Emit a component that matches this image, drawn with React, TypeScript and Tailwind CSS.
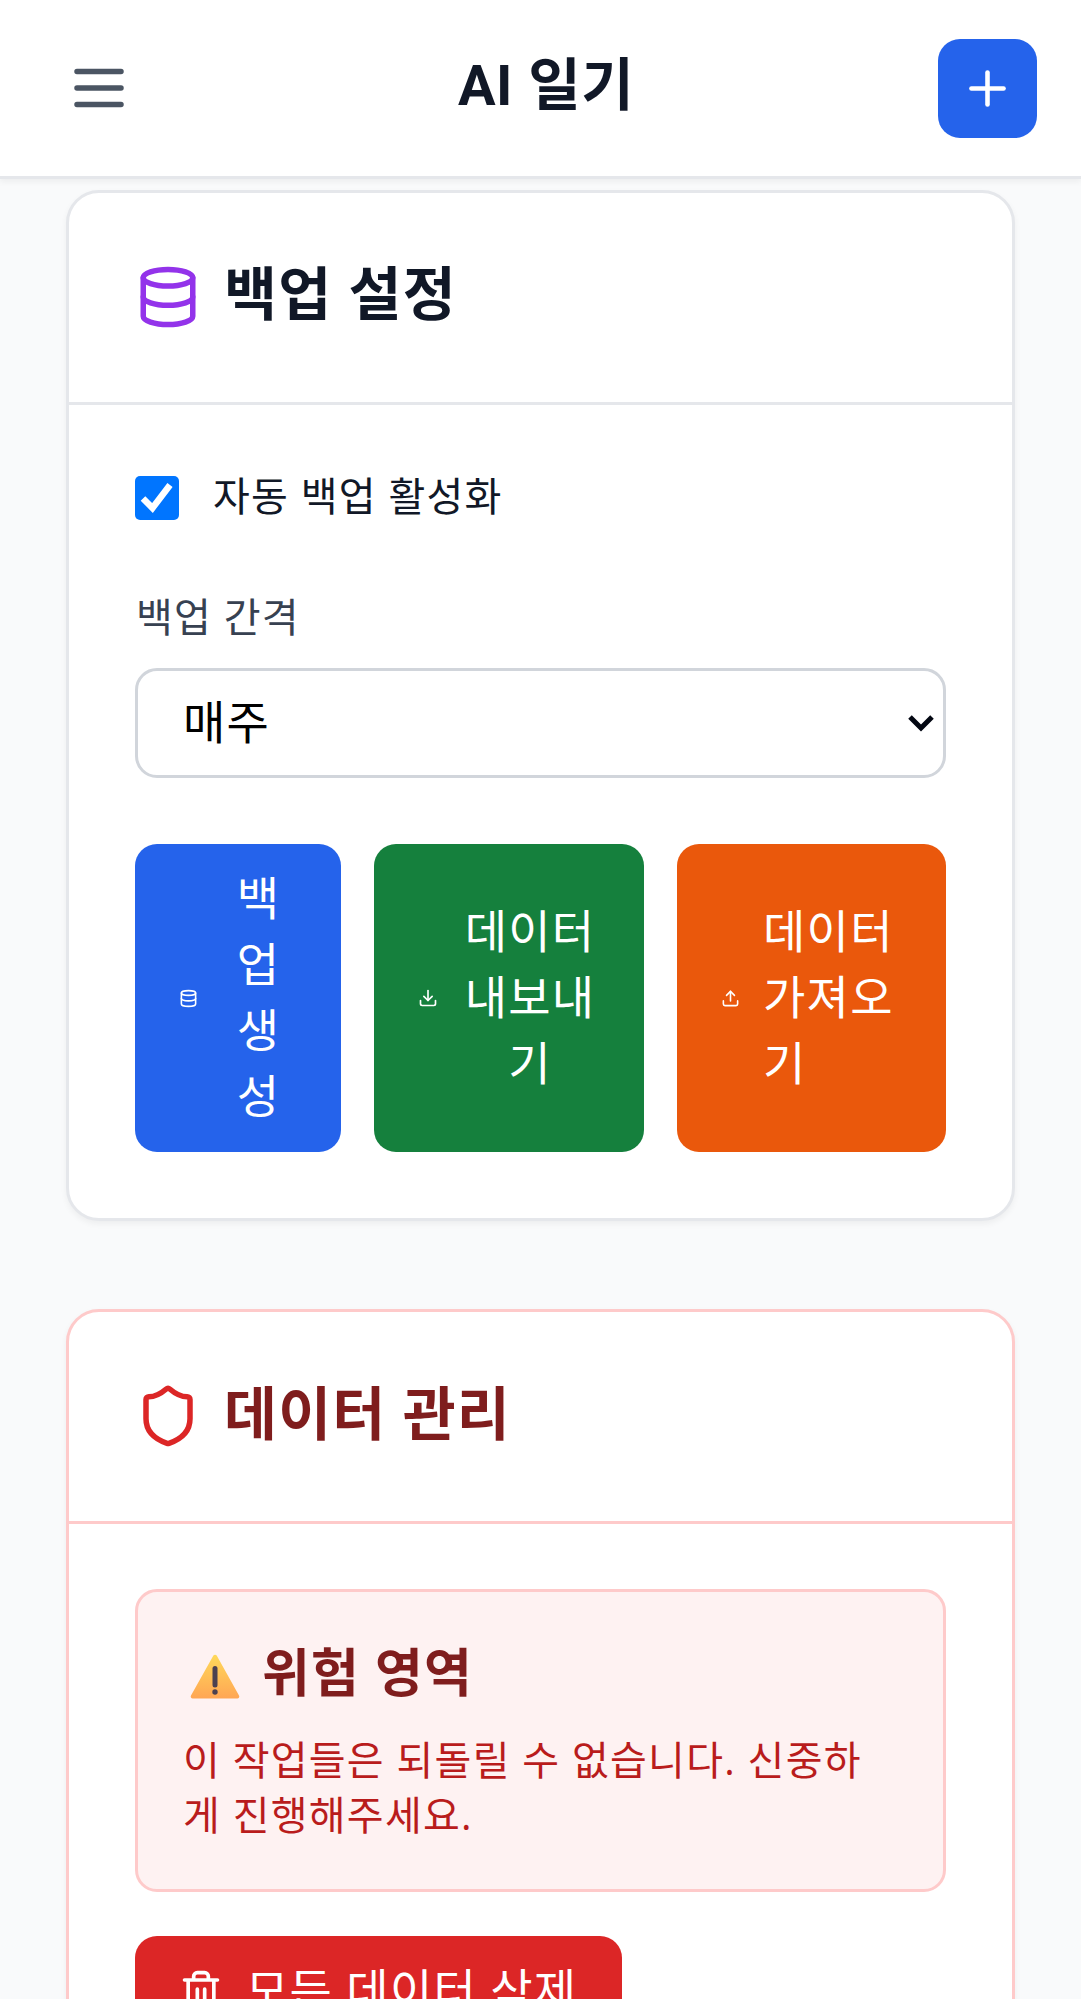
import React from "react";
import { Database, Download, Upload, Shield, Plus } from "lucide-react";

function MenuIcon() {
  return (
    <svg className="size-[66px]" viewBox="0 0 24 24" fill="none" stroke="currentColor" strokeWidth="2" strokeLinecap="round">
      <path d="M4 6h16M4 12h16M4 18h16" />
    </svg>
  );
}

function TrashIcon() {
  return (
    <svg className="size-[44px] shrink-0" viewBox="0 0 24 24" fill="none" stroke="currentColor" strokeWidth="2" strokeLinecap="round" strokeLinejoin="round">
      <path d="M3 6h18M19 6v14a2 2 0 0 1-2 2H7a2 2 0 0 1-2-2V6M8 6V4a2 2 0 0 1 2-2h4a2 2 0 0 1 2 2v2M10 11v6M14 11v6" />
    </svg>
  );
}

function WarningIcon() {
  return (
    <svg className="mt-[6px] h-[47px] w-[50px] shrink-0" viewBox="0 0 50 47">
      <defs>
        <linearGradient id="warn" x1="0" y1="0" x2="0" y2="1">
          <stop offset="0" stopColor="#ffd95a" />
          <stop offset="1" stopColor="#ffa654" />
        </linearGradient>
      </defs>
      <path d="M23.4 1.6a1.9 1.9 0 0 1 3.3 0L49 41.500a1.900 1.900 0 0 1-1.700 2.900H2.700A1.900 1.900 0 0 1 1 41.500Z" fill="url(#warn)" />
      <rect x="22.500" y="12" width="5" height="21.500" rx="2.500" fill="#4c4150" />
      <circle cx="25" cy="38" r="2.700" fill="#4c4150" />
    </svg>
  );
}

export default function App() {
  return (
    <div className="h-[1999px] overflow-hidden bg-gray-50 font-['Open_Sans','Noto_Sans_CJK_KR',sans-serif] tracking-[1.25px] text-[#111827]">
      <header className="relative flex h-[179px] items-center justify-between border-b-3 border-[#e5e7eb] bg-white px-[44px] shadow-[0_3px_6px_rgba(0,0,0,0.05)]">
        <button className="p-[22px] text-[#4b5563]" aria-label="메뉴"><MenuIcon /></button>
        <h1 className="pb-[6px] text-[57px] leading-[77px] font-bold tracking-[0.500px]"><span className="font-['Roboto'] text-[56px]">AI</span> 일기</h1>
        <button className="rounded-[22px] bg-[#2563eb] p-[22px] text-white" aria-label="추가"><Plus className="size-[55px]" /></button>
      </header>

      <main className="flex flex-col gap-[88px] px-[66px] pt-[11px]">
        <section className="rounded-[33px] border-3 border-[#e5e7eb] bg-white shadow-[0_3px_6px_rgba(0,0,0,0.05)]">
          <div className="flex h-[212px] items-center border-b-3 border-[#e5e7eb] px-[66px] pb-px">
            <Database className="size-[66px] text-[#9333ea]" />
            <h2 className="ml-[23px] pb-[7px] text-[57.500px] leading-[77px] font-bold">백업 설정</h2>
          </div>
          <div className="px-[66px] pt-[65px] pb-[66px]">
            <label className="flex h-[55px] items-center gap-[34px] text-[40px] leading-[55px]">
              <span className="flex size-[44px] items-center justify-center rounded-[5px] bg-[#0075ff] text-white">
                <svg className="size-[44px]" viewBox="0 0 44 44" fill="none" stroke="currentColor" strokeWidth="6.500"><path d="M8 22.500 L17.500 32 L35 9" /></svg>
              </span>
              <span className="pb-[4px]">자동 백업 활성화</span>
            </label>
            <p className="mt-[64px] mb-[24px] pl-px text-[40px] leading-[55px] text-[#374151]">백업 간격</p>
            <div className="flex h-[110px] items-center justify-between rounded-[22px] border-3 border-[#d1d5db] bg-white pr-[9px] pl-[45px] text-[46px] leading-[66px] text-black">
              <span className="pb-[4px]">매주</span>
              <svg className="mt-px h-[17px] w-[26px]" viewBox="0 0 26 17" fill="none" stroke="#030712" strokeWidth="5"><path d="M2 2l11 11L24 2" /></svg>
            </div>
            <div className="mt-[66px] flex h-[308px] gap-[33px] text-[46px] leading-[66px] text-white">
              <button className="flex w-[206px] items-center rounded-[22px] bg-[#2563eb] px-[44px]">
                <Database className="mr-[22px] size-[19px] shrink-0" /><span className="flex-1 pb-[4px]">백업 생성</span>
              </button>
              <button className="flex w-[270px] items-center rounded-[22px] bg-[#15803d] px-[44px]">
                <Download className="mr-[22px] size-[20px] shrink-0" /><span className="flex-1 pb-[4px]">데이터 내보내기</span>
              </button>
              <button className="flex flex-1 items-center rounded-[22px] bg-[#ea580c] px-[44px] text-left">
                <Upload className="mr-[23px] size-[19px] shrink-0" /><span className="flex-1 pb-[4px]">데이터 가져오기</span>
              </button>
            </div>
          </div>
        </section>

        <section className="rounded-[33px] border-3 border-[#fecaca] bg-white shadow-[0_3px_6px_rgba(0,0,0,0.05)]">
          <div className="flex h-[212px] items-center border-b-3 border-[#fecaca] px-[66px] pb-px">
            <Shield className="size-[66px] text-[#dc2626]" />
            <h2 className="ml-[23px] pb-[6px] text-[57.500px] leading-[77px] font-bold text-[#7f1d1d]">데이터 관리</h2>
          </div>
          <div className="px-[66px] pt-[65px] pb-[66px]">
            <div className="rounded-[22px] border-3 border-[#fecaca] bg-[#fef2f2] p-[44px]">
              <h3 className="mb-[19px] flex h-[77px] items-center pl-[8px] text-[52px] leading-[77px] font-bold text-[#7f1d1d]">
                <WarningIcon /><span className="ml-[22px] pb-[7px]">위험 영역</span>
              </h3>
              <p className="mb-[3px] pr-[10px] pl-px text-[40px] leading-[55px] text-[#b91c1c]">이 작업들은 되돌릴 수 없습니다. 신중하게 진행해주세요.</p>
            </div>
            <button className="mt-[44px] flex h-[110px] w-[487px] items-center gap-[23px] rounded-[22px] bg-[#dc2626] pl-[44px] text-[46px] leading-[66px] whitespace-nowrap text-white">
              <TrashIcon /><span className="pb-[4px]">모든 데이터 삭제</span>
            </button>
          </div>
        </section>
      </main>
    </div>
  );
}
